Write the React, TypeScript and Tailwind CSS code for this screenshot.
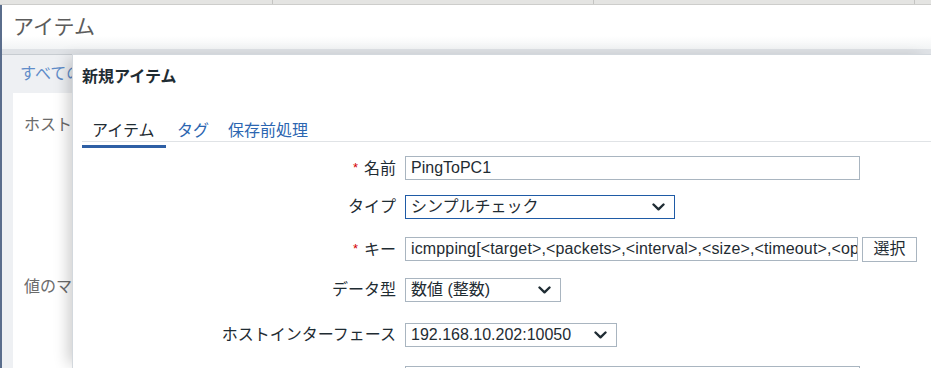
import React from "react";

/* ── Form rows ─────────────────────────────────────────── */
function Chevron() {
  return (
    <svg width="13" height="8" viewBox="0 0 13 8" className="shrink-0">
      <polyline
        points="1.5,1.5 6.5,6.3 11.5,1.5"
        fill="none"
        stroke="#1f2c33"
        strokeWidth="2.4"
        strokeLinecap="round"
        strokeLinejoin="round"
      />
    </svg>
  );
}

function Label({ text, required }: { text: string; required?: boolean }) {
  return (
    <div className="w-[323px] shrink-0 text-right text-[16px] leading-[20px] text-[#1f2c33]">
      {required && <span className="mr-[6px] align-[2px] text-[13px] text-[#d40000]">*</span>}
      {text}
    </div>
  );
}

function Select({ value, width, focused }: { value: string; width: string; focused?: boolean }) {
  return (
    <div
      className={`ml-[9px] flex h-[24px] items-center justify-between border bg-white pl-[5px] pr-[9px] text-[16px] leading-[20px] text-[#1f2c33] ${width} ${
        focused ? "border-[#1f5ba6]" : "border-[#a9b5c0]"
      }`}
    >
      <span className="whitespace-nowrap">{value}</span>
      <Chevron />
    </div>
  );
}

export default function App() {
  return (
    <div className="relative h-[368px] w-[931px] overflow-hidden bg-white font-['Liberation_Sans','Noto_Sans_CJK_JP',sans-serif]">
      {/* top strip */}
      <div className="flex h-[5px] border-b border-[#cdcdcb] bg-[#e4e4e2]">
        <div className="w-[273px] border-r border-[#c4c4c2]" />
        <div className="w-[321px] border-r border-[#c4c4c2]" />
        <div className="w-[321px] border-r border-[#c4c4c2]" />
      </div>

      <div className="flex h-[363px]">
        <div className="w-[2px] bg-[#5a6d8c]" />
        <div className="flex flex-1 flex-col">
          <header className="flex h-[44px] items-center bg-gradient-to-b from-white from-70% to-[#f2f4f5] pl-[11px]">
            <h1 className="text-[21px] leading-[26px] text-[#5c5c5c]">アイテム</h1>
          </header>
          <div className="h-[6px] border-b border-[#c7ccd1] bg-[#dfe2e6]" />
          {/* page content behind the dialog (only a sliver shows) */}
          <div className="w-[70px] flex-1 overflow-hidden bg-[#eef0f3] pl-[11px]">
            <div className="whitespace-nowrap pl-[7px] pt-[9px] text-[16px] leading-[20px] text-[#5f8cc9]">すべての</div>
            <div className="mt-[9px] h-full whitespace-nowrap bg-white pl-[11px] pt-[22px] text-[16px] leading-[20px] text-[#6b6b6b]">
              <div>ホスト</div>
              <div className="mt-[142px]">値のマ</div>
            </div>
          </div>
        </div>
      </div>

      {/* modal dialog */}
      <div className="absolute bottom-0 left-[72px] right-0 top-[54px] border-l border-t border-[#d3d8dd] bg-white shadow-[-8px_0_14px_-4px_rgba(0,0,0,0.2)]">
        <div className="pl-[9px] pt-[12px] text-[16px] font-bold leading-[20px] text-[#1f2c33]">新規アイテム</div>

        <div className="ml-[9px] mt-[34px] flex border-b border-[#e0e3e6] text-[16px] leading-[20px]">
          <span className="w-[84px] pl-[10px] text-[#1f2c33]">アイテム</span>
          <span className="ml-[11px] text-[#2c66b1]">タグ</span>
          <span className="ml-[19px] text-[#2c66b1]">保存前処理</span>
        </div>
        <div className="ml-[9px] mt-[3px] h-[3px] w-[84px] bg-[#2e5fa5]" />

        <div className="mt-[8px] flex h-[24px] items-center">
          <Label text="名前" required />
          <input
            readOnly
            value="PingToPC1"
            className="ml-[9px] h-[24px] w-[455px] border border-[#a9b5c0] pl-[5px] text-[16px] text-[#1f2c33] outline-none"
          />
        </div>

        <div className="mt-[15px] flex h-[24px] items-center">
          <Label text="タイプ" />
          <Select value="シンプルチェック" width="w-[270px]" focused />
        </div>

        <div className="mt-[18px] flex h-[24px] items-center">
          <Label text="キー" required />
          <input
            readOnly
            value="icmpping[<target>,<packets>,<interval>,<size>,<timeout>,<options>]"
            className="ml-[9px] h-[24px] w-[453px] border border-[#a9b5c0] pl-[5px] text-[16px] tracking-[0.14px] text-[#1f2c33] outline-none"
          />
          <button className="ml-[4px] h-[25px] w-[55px] border border-[#a9b5c0] bg-white text-[16px] leading-[20px] text-[#1f2c33]">
            選択
          </button>
        </div>

        <div className="mt-[17px] flex h-[24px] items-center">
          <Label text="データ型" />
          <Select value="数値 (整数)" width="w-[156px]" />
        </div>

        <div className="mt-[21px] flex h-[24px] items-center">
          <Label text="ホストインターフェース" />
          <Select value="192.168.10.202:10050" width="w-[212px]" />
        </div>

        <div className="mt-[19px] flex h-[24px] items-center">
          <Label text="" />
          <div className="ml-[9px] h-[24px] w-[455px] border border-[#a9b5c0]" />
        </div>
      </div>
    </div>
  );
}
